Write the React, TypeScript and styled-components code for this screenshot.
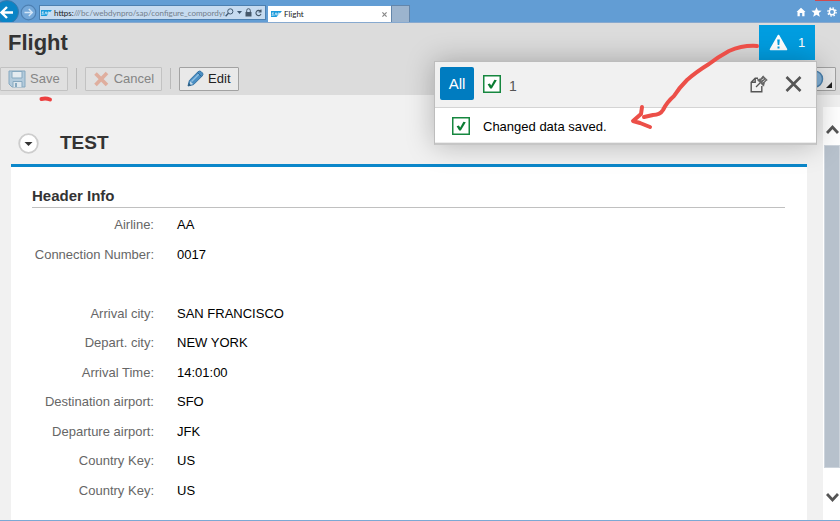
import React from "react";
import styled, { createGlobalStyle } from "styled-components";

const Global = createGlobalStyle`
  * { box-sizing: border-box; }
  html, body { margin: 0; }
  body { background: #f1f1f1; font-family: "Liberation Sans", Arial, sans-serif; font-size: 13px; color: #000; }
  button, input { font: inherit; color: inherit; margin: 0; padding: 0; border: 0; background: none; }
  svg { display: block; flex: none; }
`;

const Page = styled.div`
  position: relative;
  display: flex;
  flex-direction: column;
  min-height: 100vh;
  overflow: hidden;
  border-bottom: 1px solid #7ba9d4;
`;

/* Browser chrome */
const Chrome = styled.header`
  position: relative;
  display: flex;
  align-items: flex-end;
  height: 23px;
  background: #629dd4;
  border-bottom: 1px solid #87a9cf;
  font-family: Lato, sans-serif;
`;
const CloseEdge = styled.div`
  position: absolute;
  top: 0;
  right: 0;
  width: 25px;
  height: 1px;
  background: #cf4b4f;
`;
const NavButton = styled.button`
  align-self: stretch;
  display: flex;
`;
const AddressBar = styled.div`
  display: flex;
  align-items: center;
  width: 227px;
  height: 15px;
  margin: 0 2px 2px;
  padding: 0 3px 0 1px;
  background: #c6dbf0;
  border: 1px solid #4d80b0;
  font-size: 8px;
  color: #222;
`;
const Scheme = styled.label`
  margin-left: 2px;
`;
const Address = styled.input`
  flex: 1;
  min-width: 0;
  color: #737e8a;
`;
const AddressTools = styled.div`
  display: flex;
  align-items: center;
  gap: 3px;
`;
const Tab = styled.div`
  display: flex;
  align-items: center;
  gap: 2px;
  width: 123px;
  height: 16px;
  padding: 0 4px 0 3px;
  background: #fff;
  font-size: 8px;
  color: #222;
`;
const TabClose = styled.button`
  display: flex;
  margin-left: auto;
`;
const NewTab = styled.button`
  width: 19px;
  height: 17px;
  background: #9cb4ce;
  border: 1px solid #6386ab;
  border-bottom: 0;
`;
const ChromeTools = styled.div`
  display: flex;
  align-items: center;
  gap: 5px;
  height: 20px;
  margin-left: auto;
  padding-right: 3px;
`;
const PlainButton = styled.button`
  display: flex;
`;

/* Application header */
const AppHeader = styled.div`
  display: flex;
  justify-content: space-between;
  height: 38px;
  padding: 2px 25px 0 8px;
  background: #dcdcdc;
`;
const Title = styled.h1`
  margin: 0;
  font-size: 22px;
  line-height: 36px;
  color: #333;
`;
const Notice = styled.button`
  display: flex;
  align-items: center;
  gap: 10px;
  width: 56px;
  height: 35px;
  padding-left: 10px;
  background: #009de0;
  color: #fff;
`;
const Toolbar = styled.div`
  display: flex;
  align-items: center;
  gap: 8px;
  height: 34px;
  padding: 1px 4px 0 0;
  background: #dcdcdc;
`;
const ToolButton = styled.button`
  display: flex;
  align-items: center;
  gap: 4px;
  height: 24px;
  padding: 0 7px;
  background: ${(p) => (p.disabled ? "#e0e0e0" : "#e9e9e9")};
  border: 1px solid ${(p) => (p.disabled ? "#c2c2c2" : "#a2a2a2")};
  border-radius: 1px;
  color: ${(p) => (p.disabled ? "#858585" : "#222")};
`;
const Separator = styled.div`
  width: 1px;
  height: 21px;
  background: #b9b9b9;
`;
const HelpButton = styled(ToolButton)`
  justify-content: flex-end;
  width: 40px;
  margin-left: auto;
  padding: 0 2px;
`;

/* Body */
const Body = styled.div`
  flex: 1;
  display: flex;
`;
const Content = styled.main`
  flex: 1;
  display: flex;
  flex-direction: column;
  padding: 31px 16px 0 11px;
`;
const SectionHead = styled.div`
  display: flex;
  align-items: center;
  gap: 21px;
  height: 38px;
  padding: 0 0 4px 7px;
`;
const Expander = styled.button`
  display: flex;
`;
const SectionTitle = styled.h2`
  margin: 0;
  font-size: 19px;
  color: #333;
`;
const Panel = styled.section`
  flex: 1;
  display: flex;
  flex-direction: column;
  padding: 19px 22px 15px 21px;
  background: #fff;
  border-top: 3px solid #0b87ca;
`;
const GroupTitle = styled.h3`
  margin: 0;
  height: 22px;
  font-size: 15px;
  line-height: 20px;
  color: #333;
  border-bottom: 1px solid #c0c0c0;
`;
const Fields = styled.dl`
  flex: 1;
  display: grid;
  grid-auto-rows: minmax(24px, 1fr);
  margin: 2px 0 0;
`;
const Field = styled.div`
  display: grid;
  grid-template-columns: 122px 1fr;
  column-gap: 23px;
  align-items: center;
`;
const Label = styled.dt`
  text-align: right;
  color: #666;
`;
const Value = styled.dd`
  margin: 0;
`;

/* Scroll bar */
const ScrollBar = styled.div`
  display: flex;
  flex-direction: column;
  width: 17px;
  margin-top: 12px;
  background: #fff;
`;
const ScrollArrow = styled.button<{ $height: number }>`
  display: flex;
  align-items: center;
  justify-content: center;
  height: ${(p) => p.$height}px;
  padding: 6px 0 0 1px;
`;
const Thumb = styled.div`
  flex: 1;
  margin-left: 1px;
  background: #b7c1cc;
  border: 1px solid #cdd4dc;
`;

/* Message popover */
const Popover = styled.aside`
  position: absolute;
  top: 61px;
  right: 23px;
  width: 383px;
  background: #fff;
  border: 1px solid #bdbdbd;
  border-bottom: 2px solid #c6c6c6;
  box-shadow: 0 0 28px rgba(0, 0, 0, 0.26);
`;
const PopoverHead = styled.div`
  display: flex;
  align-items: center;
  height: 46px;
  padding: 0 14px 2px 5px;
  background: #f1f1f1;
  border-bottom: 1px solid #d4d4d4;
`;
const AllButton = styled.button`
  width: 34px;
  height: 33px;
  background: #007cc0;
  border-radius: 2px;
  color: #fff;
  font-size: 15px;
`;
const Filter = styled.button`
  display: flex;
  align-items: center;
  gap: 8px;
  margin-left: 9px;
  font-size: 14px;
  color: #555;
`;
const FilterCount = styled.span`
  padding-top: 4px;
`;
const PopoverTools = styled.div`
  display: flex;
  align-items: center;
  gap: 17px;
  margin-left: auto;
`;
const Message = styled.div`
  display: flex;
  align-items: center;
  gap: 13px;
  height: 35px;
  padding: 2px 17px 0;
  border-bottom: 1px solid #ececec;
`;

const Arrow = styled.svg`
  position: absolute;
  top: -22px;
  left: 190px;
  pointer-events: none;
`;
const SaveMark = styled.svg`
  position: absolute;
  top: 95px;
  left: 38px;
  pointer-events: none;
`;

const CompanyLogo = () => (
  <svg width="11" height="6" viewBox="0 0 22 12" aria-hidden="true">
    <path d="M0 0H22L11 12H0Z" fill="#1a9bdc" />
    <path d="M1 8.5H5L2 4H6M7.5 9L10 3.5L12 9M14 9V4H17V6.5H14" fill="none" stroke="#e8f5fd" strokeWidth="1.5" />
  </svg>
);

const Check = () => (
  <svg width="18" height="18" viewBox="0 0 18 18" aria-hidden="true">
    <rect x=".75" y=".75" width="16.5" height="16.5" fill="#fff" stroke="#16873f" strokeWidth="1.5" />
    <path d="M4.6 9.2L6.9 8.4L8.2 10.4L11.4 4.8L13.8 5.2L8.8 13.6H7.2Z" fill="#0c7c33" />
  </svg>
);

const fields: ([string, string] | null)[] = [
  ["Airline:", "AA"],
  ["Connection Number:", "0017"],
  null,
  ["Arrival city:", "SAN FRANCISCO"],
  ["Depart. city:", "NEW YORK"],
  ["Arrival Time:", "14:01:00"],
  ["Destination airport:", "SFO"],
  ["Departure airport:", "JFK"],
  ["Country Key:", "US"],
  ["Country Key:", "US"],
];

export default function App() {
  return (
    <Page>
      <Global />
      <Chrome>
        <CloseEdge />
        <NavButton aria-label="Back">
          <svg width="19" height="22" viewBox="0 0 19 22">
            <circle cx="7" cy="12" r="11.5" fill="#0a84c6" stroke="#3b78ab" />
            <path d="M13 12.5H2M7 7L1.5 12.5L7 18" fill="none" stroke="#fff" strokeWidth="2.4" />
          </svg>
        </NavButton>
        <NavButton aria-label="Forward">
          <svg width="18" height="22" viewBox="0 0 18 22">
            <circle cx="9.5" cy="12.5" r="7.3" fill="#75a9da" stroke="#4e81b3" strokeWidth="1.2" />
            <path d="M5.5 12.5H13M9.8 9L13.3 12.5L9.8 16" fill="none" stroke="#d4e6f7" strokeWidth="1.4" />
          </svg>
        </NavButton>
        <AddressBar>
          <CompanyLogo />
          <Scheme htmlFor="address">https:</Scheme>
          <Address id="address" readOnly value="///bc/webdynpro/sap/configure_compordyr" />
          <AddressTools>
            <svg width="9" height="9" viewBox="0 0 9 9" fill="none" stroke="#3f5870">
              <circle cx="5.3" cy="3.4" r="2.6" />
              <path d="M3.4 5.3L.6 8.3" strokeWidth="1.3" />
            </svg>
            <svg width="5" height="3" viewBox="0 0 5 3"><path d="M0 0H5L2.5 3Z" fill="#3f5870" /></svg>
            <svg width="7" height="9" viewBox="0 0 7 9">
              <path d="M.5 4H6.5V8.5H.5Z" fill="#46586a" />
              <path d="M1.7 4V2.5a1.8 1.8 0 0 1 3.6 0V4" fill="none" stroke="#46586a" />
            </svg>
            <svg width="7" height="8" viewBox="0 0 7 8" fill="none" stroke="#46586a">
              <path d="M5.6 2.4A2.6 2.6 0 1 0 6 4.8M6 .5V3H3.5" strokeWidth="1.1" />
            </svg>
          </AddressTools>
        </AddressBar>
        <Tab>
          <CompanyLogo />
          Flight
          <TabClose aria-label="Close tab">
            <svg width="5" height="5" viewBox="0 0 5 5"><path d="M.4 .4L4.6 4.6M4.6 .4L.4 4.6" stroke="#888" strokeWidth="1.2" /></svg>
          </TabClose>
        </Tab>
        <NewTab aria-label="New tab" />
        <ChromeTools>
          <PlainButton aria-label="Home">
            <svg width="10" height="10" viewBox="0 0 10 10">
              <path d="M5 .8L9.5 5H8.5V9.2H6.2V6H3.8V9.2H1.5V5H.5Z" fill="#fff" />
            </svg>
          </PlainButton>
          <PlainButton aria-label="Favorites">
            <svg width="11" height="10" viewBox="0 0 11 10">
              <path d="M5.5 .2L6.9 3.6L10.6 3.8L7.8 6.1L8.8 9.8L5.5 7.8L2.2 9.8L3.2 6.1L.4 3.8L4.1 3.6Z" fill="#fff" />
            </svg>
          </PlainButton>
          <PlainButton aria-label="Tools">
            <svg width="10" height="10" viewBox="0 0 10 10" fill="none" stroke="#fff">
              <circle cx="5" cy="5" r="2.7" strokeWidth="1.5" />
              <circle cx="5" cy="5" r="4.1" strokeWidth="1.4" strokeDasharray="1.6 1.62" />
            </svg>
          </PlainButton>
        </ChromeTools>
      </Chrome>

      <AppHeader>
        <Title>Flight</Title>
        <Notice aria-label="1 message">
          <svg width="19" height="17" viewBox="0 0 19 17">
            <path d="M9.5 1.5L17.5 15.5H1.5Z" fill="#fff" stroke="#fff" strokeWidth="1.6" strokeLinejoin="round" />
            <path d="M8.2 5.5H10.8L10.3 11H8.7ZM8.5 12.4H10.5V14.4H8.5Z" fill="#009de0" />
          </svg>
          1
        </Notice>
      </AppHeader>
      <Toolbar>
        <ToolButton disabled>
          <svg width="18" height="18" viewBox="0 0 18 18">
            <path d="M1 1H17V17H4L1 14Z" fill="#b3cbdc" stroke="#87a9c0" />
            <path d="M4 1.5H14V8H4Z" fill="#e4ebf0" stroke="#87a9c0" />
            <path d="M5 17V11.5H14V17" fill="#dde6ec" stroke="#87a9c0" />
            <path d="M7 13H9V17H7Z" fill="#87a9c0" />
          </svg>
          Save
        </ToolButton>
        <Separator />
        <ToolButton disabled>
          <svg width="17" height="16" viewBox="0 0 17 16">
            <path d="M2.5 2.5L14 14M14 2L2.5 14" stroke="#dfae9e" strokeWidth="3.6" />
          </svg>
          Cancel
        </ToolButton>
        <Separator />
        <ToolButton>
          <svg width="17" height="17" viewBox="0 0 17 17">
            <path d="M1 16L2.4 10.4L11 1.8Q12.5 .5 14 1.5L15.6 3.1Q16.5 4.5 15.2 6L6.6 14.6Z" fill="#4a8fc4" stroke="#3773a3" />
            <path d="M4.5 11.5L12 4" stroke="#8fbfe2" strokeWidth="1.5" />
            <path d="M10.5 2.6L14.4 6.5" stroke="#2b648f" />
            <path d="M2.9 11L6.1 14.1L3.2 15Z" fill="#c5d9e8" />
            <path d="M1 16L1.8 13L4 15.2Z" fill="#2b5878" />
          </svg>
          Edit
        </ToolButton>
        <HelpButton aria-label="Help">
          <svg width="29" height="20" viewBox="0 0 29 20">
            <circle cx="10.5" cy="10" r="8" fill="#83b2d8" stroke="#4c82ae" strokeWidth="1.5" />
            <path d="M28 13V19H22Z" fill="#222" />
          </svg>
        </HelpButton>
      </Toolbar>

      <Body>
        <Content>
          <SectionHead>
            <Expander aria-label="Collapse section">
              <svg width="21" height="21" viewBox="0 0 21 21">
                <circle cx="10.5" cy="10.5" r="9.3" fill="#fff" stroke="#cdcdcd" strokeWidth="1.8" />
                <path d="M6.5 9H14.5L10.5 13Z" fill="#333" />
              </svg>
            </Expander>
            <SectionTitle>TEST</SectionTitle>
          </SectionHead>
          <Panel>
            <GroupTitle>Header Info</GroupTitle>
            <Fields>
              {fields.map((f, i) => (
                <Field key={i}>
                  {f && <Label>{f[0]}</Label>}
                  {f && <Value>{f[1]}</Value>}
                </Field>
              ))}
            </Fields>
          </Panel>
        </Content>
        <ScrollBar>
          <ScrollArrow $height={38} aria-label="Scroll up">
            <svg width="13" height="11" viewBox="0 0 13 11"><path d="M1 9L6.5 3L12 9" fill="none" stroke="#555" strokeWidth="2.8" /></svg>
          </ScrollArrow>
          <Thumb />
          <ScrollArrow $height={52} aria-label="Scroll down">
            <svg width="13" height="11" viewBox="0 0 13 11"><path d="M1 2L6.5 8L12 2" fill="none" stroke="#555" strokeWidth="2.8" /></svg>
          </ScrollArrow>
        </ScrollBar>
      </Body>

      <Popover aria-label="Messages">
        <PopoverHead>
          <AllButton>All</AllButton>
          <Filter aria-label="Success messages: 1">
            <Check />
            <FilterCount>1</FilterCount>
          </Filter>
          <PopoverTools>
            <PlainButton aria-label="Pin messages">
              <svg width="18" height="18" viewBox="0 0 18 18" fill="none" stroke="#555">
                <path d="M8 3.2H5.2L1.2 7.2V16.8H11.8V11M5.2 3.2V7.2H1.2" strokeWidth="1.4" />
                <path d="M6 12L10 8" strokeWidth="1.2" />
                <path d="M13 .8L17.3 5L15.8 6L14.6 7.6L13.6 11.2L7.2 4.8L10.6 3.7L12 2.3Z" fill="#666" strokeWidth=".6" />
                <path d="M11.4 5.2L14 3.6M12.6 7.2L15.4 5" stroke="#e4e4e4" strokeWidth=".8" />
              </svg>
            </PlainButton>
            <PlainButton aria-label="Close messages">
              <svg width="17" height="16" viewBox="0 0 17 16"><path d="M1.5 1L15.5 15M15.5 1L1.5 15" stroke="#555" strokeWidth="2.6" /></svg>
            </PlainButton>
          </PopoverTools>
        </PopoverHead>
        <Message>
          <Check />
          Changed data saved.
        </Message>
        <Arrow width="140" height="96" viewBox="0 0 140 96" fill="none" stroke="#ec4f48" strokeWidth="4" strokeLinecap="round" strokeLinejoin="round" aria-hidden="true">
          <path d="M132 6Q118 5 104 11Q93 17 84 24Q71 32 62 40Q54 48 49 56Q42 62 38 70Q35 75 28 75L19 77" />
          <path d="M17 67L16 74L8 81L15 83L25 87" />
        </Arrow>
      </Popover>
      <SaveMark width="16" height="8" viewBox="0 0 16 8" fill="none" stroke="#ec4040" strokeWidth="4" strokeLinecap="round" aria-hidden="true">
        <path d="M3.5 4Q8 3 12 4.5" />
      </SaveMark>
    </Page>
  );
}
